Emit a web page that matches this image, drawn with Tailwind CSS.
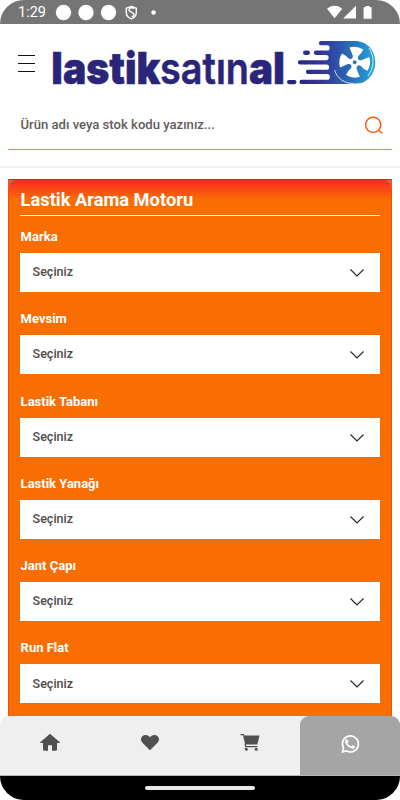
<!DOCTYPE html>
<html lang="tr">
<head>
<meta charset="utf-8">
<meta name="viewport" content="width=device-width, initial-scale=1">
<title>lastiksatınal</title>
<script src="https://cdn.jsdelivr.net/npm/@tailwindcss/browser@4"></script>
</head>
<body class="bg-white font-['Roboto','Liberation_Sans',sans-serif]">
<div class="w-[400px] h-[800px] flex flex-col overflow-hidden rounded-[24px] bg-white">
  <div class="h-6 shrink-0 bg-[#757575] flex items-center text-white">
    <span class="ml-[18px] w-[37px] text-[14.5px] leading-6 pt-[2px]">1:29</span>
    <svg class="w-[105px] h-6" viewBox="55 0 105 24" fill="#fff">
      <circle cx="63.500" cy="12.500" r="7.700"/><circle cx="86" cy="12.500" r="7.700"/><circle cx="108.500" cy="12.500" r="7.700"/>
      <path d="M131.300 6.500l5 1.700v4.300c0 3-2.200 5.300-5 6.300-2.800-1-5-3.300-5-6.300V8.200z" fill="none" stroke="#fff" stroke-width="1.400"/>
      <path d="M134.500 8.200c-3-1-5.500 0-5.500 1.800 0 2.200 5 2.200 5 4.600 0 1.200-1 2-2.200 2.600" fill="none" stroke="#fff" stroke-width="1.500"/>
      <circle cx="153.600" cy="12.500" r="2.300"/>
    </svg>
    <svg class="ml-auto w-[75px] h-6" viewBox="325 0 75 24" fill="#fff">
      <path d="M327 8.700c4.500-4 10.700-4 15.200 0l-7.600 9.500z"/><path d="M356 5.700v12.800h-12.800z"/><path d="M363.600 7.200h2v-1.300h4v1.300h2v11.600h-8z"/>
    </svg>
  </div>
  <header class="h-[144px] shrink-0 border-b-2 border-[#f1f1f1] flex flex-col">
    <div class="h-[76px] flex">
      <button class="ml-[18px] mt-[30px] h-[18px] w-[17px] flex flex-col justify-between py-[0.500px]" aria-label="Menü">
        <span class="w-full h-px bg-[#111]"></span><span class="w-full h-px bg-[#111]"></span><span class="w-full h-px bg-[#111]"></span>
      </button>
      <svg class="ml-[15px] w-[330px] h-[76px]" viewBox="50 24 330 76">
        <defs>
          <linearGradient id="sweep" x1="298" y1="0" x2="376" y2="0" gradientUnits="userSpaceOnUse">
            <stop offset="0" stop-color="#2a2580"/><stop offset=".35" stop-color="#303b9b"/><stop offset=".68" stop-color="#2b6eb8"/><stop offset="1" stop-color="#22a9e0"/>
          </linearGradient>
        </defs>
        <text y="83.500" fill="#2a2579" stroke="#2a2579" stroke-width=".5" font-family="Inter, 'Liberation Sans', sans-serif" font-size="44.500"><tspan x="51.300" font-weight="900" textLength="109" lengthAdjust="spacingAndGlyphs">lastik</tspan><tspan x="160" font-weight="600" textLength="89" lengthAdjust="spacingAndGlyphs">satın</tspan><tspan x="249" font-weight="900" textLength="36" lengthAdjust="spacingAndGlyphs">al</tspan></text>
        <rect x="287" y="80" width="9.500" height="4.200" rx="2.100" fill="#2a2579"/>
        <g fill="url(#sweep)">
          <rect x="303" y="50.600" width="7" height="4.300" rx="2.100"/>
          <path d="M321 41H354.500C379 41 382.500 75 361.500 83L349 84H301.500a2.100 2.100 0 0 1 0-4.200H327a2.850 2.850 0 0 0 0-5.700H308a2.150 2.150 0 0 1 0-4.300H326.500a2.650 2.650 0 0 0 0-5.300H300a2.150 2.150 0 0 1 0-4.300H326a2.650 2.650 0 0 0 0-5.300H316a2.150 2.150 0 0 1 0-4.300H327a2.650 2.650 0 0 0 0-5.300H321a2.150 2.150 0 0 1 0-4.300z"/>
        </g>
        <g transform="translate(354.700 62.200) rotate(6)" fill="#fff">
          <path id="spoke" d="M-2.300-2L-2.600-6.500-6.700-14Q0-17 7.200-13.600L5.500-9.500 3-6.500 2.300-2z"/>
          <use href="#spoke" transform="rotate(90)"/><use href="#spoke" transform="rotate(180)"/><use href="#spoke" transform="rotate(270)"/>
          <circle r="4.800"/><circle r="2" fill="#2d78bf"/>
        </g>
        <path d="M334.500 70c3 9 10 13.500 19 13.500M369 48c6 9 5 20-1 28" fill="none" stroke="#fff" stroke-width=".8"/>
      </svg>
    </div>
    <div class="mx-2 h-[50px] border-b border-[#f77e68] flex items-center pl-[12.500px] pr-[8px]">
      <span class="text-[13.100px] font-medium text-[#625b5b] pt-px">Ürün adı veya stok kodu yazınız...</span>
      <svg class="ml-auto w-5 h-5 mt-px" viewBox="0 0 20 20" fill="none" stroke="#f4590b" stroke-width="1.400"><circle cx="9.200" cy="9.800" r="7.600"/><path d="M14.500 15.200l3.800 3.100"/></svg>
    </div>
  </header>
  <main class="relative mt-[11px] mx-2 h-[537px] shrink-0 border border-b-0 border-[#fa4b16] border-t-[#f5101c] bg-[#f96e03] bg-linear-[180deg,#fa2924_0,#f96e03_20px] px-[11px] overflow-hidden">
    <svg class="absolute left-0 top-0 w-[6px] h-[8px]" viewBox="0 0 6 8"><path d="M0 0H6Q1 1 0 8z" fill="#fb5554"/></svg>
    <svg class="absolute right-0 top-0 w-[6px] h-[8px]" viewBox="0 0 6 8"><path d="M6 0H0Q5 1 6 8z" fill="#fb5554"/></svg>
    <h1 class="h-9 border-b border-white text-white text-[18.300px] font-bold leading-[39px] pl-[0.600px]">Lastik Arama Motoru</h1>
    <form class="flex flex-col text-[13px]">
      <div class="h-[82.300px]"><div class="h-[37px] pt-[11px] pl-[0.600px] leading-5 font-bold text-white">Marka</div><div class="h-[39px] bg-white flex items-center justify-between pl-[12.600px] pr-[15px] text-[#504a4a]"><span class="text-[12.500px] font-medium">Seçiniz</span><svg class="w-4 h-4 mt-px" viewBox="0 0 16 16" fill="none" stroke="#222" stroke-width="1.100"><path d="M1.500 4.500L8 11l6.500-6.500"/></svg></div></div>
      <div class="h-[82.300px]"><div class="h-[37px] pt-[11px] pl-[0.600px] leading-5 font-bold text-white">Mevsim</div><div class="h-[39px] bg-white flex items-center justify-between pl-[12.600px] pr-[15px] text-[#504a4a]"><span class="text-[12.500px] font-medium">Seçiniz</span><svg class="w-4 h-4 mt-px" viewBox="0 0 16 16" fill="none" stroke="#222" stroke-width="1.100"><path d="M1.500 4.500L8 11l6.500-6.500"/></svg></div></div>
      <div class="h-[82.300px]"><div class="h-[37px] pt-[11px] pl-[0.600px] leading-5 font-bold text-white">Lastik Tabanı</div><div class="h-[39px] bg-white flex items-center justify-between pl-[12.600px] pr-[15px] text-[#504a4a]"><span class="text-[12.500px] font-medium">Seçiniz</span><svg class="w-4 h-4 mt-px" viewBox="0 0 16 16" fill="none" stroke="#222" stroke-width="1.100"><path d="M1.500 4.500L8 11l6.500-6.500"/></svg></div></div>
      <div class="h-[82.300px]"><div class="h-[37px] pt-[11px] pl-[0.600px] leading-5 font-bold text-white">Lastik Yanağı</div><div class="h-[39px] bg-white flex items-center justify-between pl-[12.600px] pr-[15px] text-[#504a4a]"><span class="text-[12.500px] font-medium">Seçiniz</span><svg class="w-4 h-4 mt-px" viewBox="0 0 16 16" fill="none" stroke="#222" stroke-width="1.100"><path d="M1.500 4.500L8 11l6.500-6.500"/></svg></div></div>
      <div class="h-[82.300px]"><div class="h-[37px] pt-[11px] pl-[0.600px] leading-5 font-bold text-white">Jant Çapı</div><div class="h-[39px] bg-white flex items-center justify-between pl-[12.600px] pr-[15px] text-[#504a4a]"><span class="text-[12.500px] font-medium">Seçiniz</span><svg class="w-4 h-4 mt-px" viewBox="0 0 16 16" fill="none" stroke="#222" stroke-width="1.100"><path d="M1.500 4.500L8 11l6.500-6.500"/></svg></div></div>
      <div class="h-[82.300px]"><div class="h-[37px] pt-[11px] pl-[0.600px] leading-5 font-bold text-white">Run Flat</div><div class="h-[39px] bg-white flex items-center justify-between pl-[12.600px] pr-[15px] text-[#504a4a]"><span class="text-[12.500px] font-medium">Seçiniz</span><svg class="w-4 h-4 mt-px" viewBox="0 0 16 16" fill="none" stroke="#222" stroke-width="1.100"><path d="M1.500 4.500L8 11l6.500-6.500"/></svg></div></div>
    </form>
  </main>
  <nav class="h-[60px] shrink-0 bg-[#efefef] rounded-t-[9px] flex border-b border-[#b0b5b5]">
    <a class="w-[100px] flex justify-center pt-4"><svg class="w-5 h-5" viewBox="0 0 20 20" fill="#505050"><path d="M10 1.700L.2 10.300c-.2.500.1.700.5.700H3v6.500c0 .8.400 1.200 1.200 1.200H8v-5.500h4v5.500h3.800c.8 0 1.200-.4 1.200-1.200V11h2.300c.5 0 .7-.4.500-.7z"/></svg></a>
    <a class="w-[100px] flex justify-center pt-4"><svg class="w-5 h-5" viewBox="0 0 20 20" fill="#505050"><path d="M10 18.200L2.700 11C-1 7 2 3 5.500 3 7.700 3 9.300 4.200 10 5.500 10.700 4.200 12.300 3 14.500 3 18 3 21 7 17.300 11z"/></svg></a>
    <a class="w-[100px] flex justify-center pt-4"><svg class="w-5 h-5" viewBox="0 0 20 20" fill="#505050"><path d="M.5 2h3.300l.7 1.500h15.100L17.300 12.500H5.200L3 3.300H.5z"/><path d="M5 11.500l.8 3.200H17.300" fill="none" stroke="#505050" stroke-width="1.200"/><circle cx="6.300" cy="17.300" r="1.500"/><circle cx="16.200" cy="17.300" r="1.500"/></svg></a>
    <a class="w-[100px] flex justify-center pt-[18px] bg-[#a5a5a5] rounded-t-[9px]"><svg class="w-5 h-5" viewBox="0 0 24 24" fill="#fff"><path d="M17.472 14.382c-.297-.149-1.758-.867-2.030-.967-.273-.099-.471-.148-.670.150-.197.297-.767.966-.940 1.164-.173.199-.347.223-.644.075-.297-.150-1.255-.463-2.390-1.475-.883-.788-1.480-1.761-1.653-2.059-.173-.297-.018-.458.130-.606.134-.133.298-.347.446-.520.149-.174.198-.298.298-.497.099-.198.050-.371-.025-.520-.075-.149-.669-1.612-.916-2.207-.242-.579-.487-.500-.669-.510-.173-.008-.371-.010-.570-.010-.198 0-.520.074-.792.372-.272.297-1.040 1.016-1.040 2.479 0 1.462 1.065 2.875 1.213 3.074.149.198 2.096 3.200 5.077 4.487.709.306 1.262.489 1.694.625.712.227 1.360.195 1.871.118.571-.085 1.758-.719 2.006-1.413.248-.694.248-1.289.173-1.413-.074-.124-.272-.198-.570-.347"/><path d="M3 21.300l1.200-4.500A9.600 9.600 0 1 1 7.600 20.200z" fill="none" stroke="#fff" stroke-width="2"/></svg></a>
  </nav>
  <div class="h-[24px] shrink-0 bg-black flex justify-center pt-[10px]"><span class="w-[110px] h-[4px] rounded-full bg-[#e6e6e6]"></span></div>
</div>
</body>
</html>
